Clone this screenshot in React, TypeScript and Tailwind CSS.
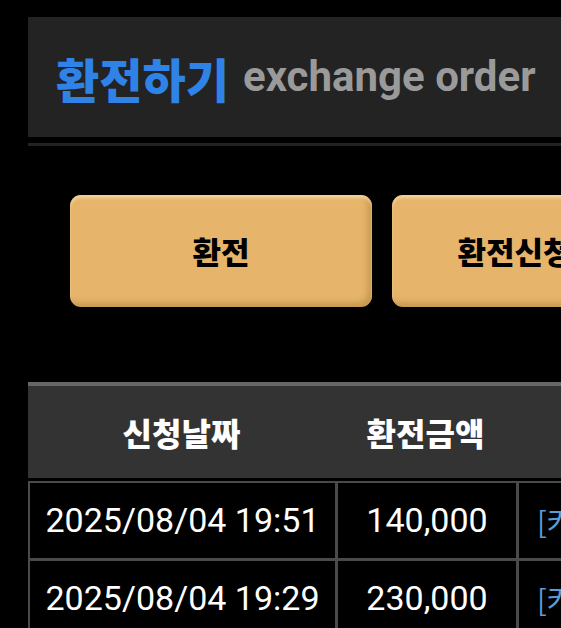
import React from 'react';

const rows = [
  { date: '2025/08/04 19:51', amount: '140,000', status: '[커미션 환전] 처리완료' },
  { date: '2025/08/04 19:29', amount: '230,000', status: '[커미션 환전] 처리완료' },
];

const ko = "font-['Noto_Sans_CJK_KR','Noto_Sans',sans-serif]";
const num = "font-['Roboto','Noto_Sans_CJK_KR',sans-serif]";

const OrderButton: React.FC<{ label: string }> = ({ label }) => (
  <button
    className={`${ko} h-[112px] w-[302px] shrink-0 rounded-[11px] bg-[#e6b56b] text-[31px] font-black text-black shadow-[inset_0_3px_3px_rgba(255,235,190,0.55),inset_-4px_-4px_6px_rgba(120,80,20,0.3)]`}
  >
    {label}
  </button>
);

export default function App() {
  return (
    <div className="h-[628px] w-[561px] overflow-hidden bg-black">
      <div className="w-[900px] pl-[28px] pt-[17px]">
        <div className="flex h-[120px] items-center bg-[#232323] pl-[28px]">
          <h1 className={`${ko} text-[47px] font-black leading-none text-[#2f82e6]`}>환전하기</h1>
          <span className={`${num} ml-[14px] text-[42px] font-bold leading-none text-[#9a9a9a]`}>exchange order</span>
        </div>
        <div className="mt-[6px] h-[3px] bg-[#222222]" />

        <div className="mt-[49px] flex gap-[20px] pl-[42px]">
          <OrderButton label="환전" />
          <OrderButton label="환전신청내역" />
        </div>

        <div className="mt-[75px]">
          <div className="grid h-[96px] grid-cols-[307px_181px_400px] items-center border-t-4 border-[#666666] bg-[#333333] text-white">
            <div className={`${ko} text-center text-[32px] font-black`}>신청날짜</div>
            <div className={`${ko} text-center text-[32px] font-black`}>환전금액</div>
            <div className={`${ko} text-center text-[32px] font-black`}>처리상태</div>
          </div>
          <div className="mt-[3px] grid grid-cols-[305px_178px_400px] gap-[3px] bg-[#4a4a4a] pl-[2px] pt-[2px]">
            {rows.map((r) => (
              <React.Fragment key={r.date}>
                <div className={`${num} flex h-[75px] items-center justify-center bg-black text-[34px] text-white`}>{r.date}</div>
                <div className={`${num} flex h-[75px] items-center justify-center bg-black text-[34px] text-white`}>{r.amount}</div>
                <div className={`${ko} flex h-[75px] items-center whitespace-nowrap bg-black pl-[18px] text-[29px] text-[#5b9bd8]`}>{r.status}</div>
              </React.Fragment>
            ))}
          </div>
        </div>
      </div>
    </div>
  );
}
